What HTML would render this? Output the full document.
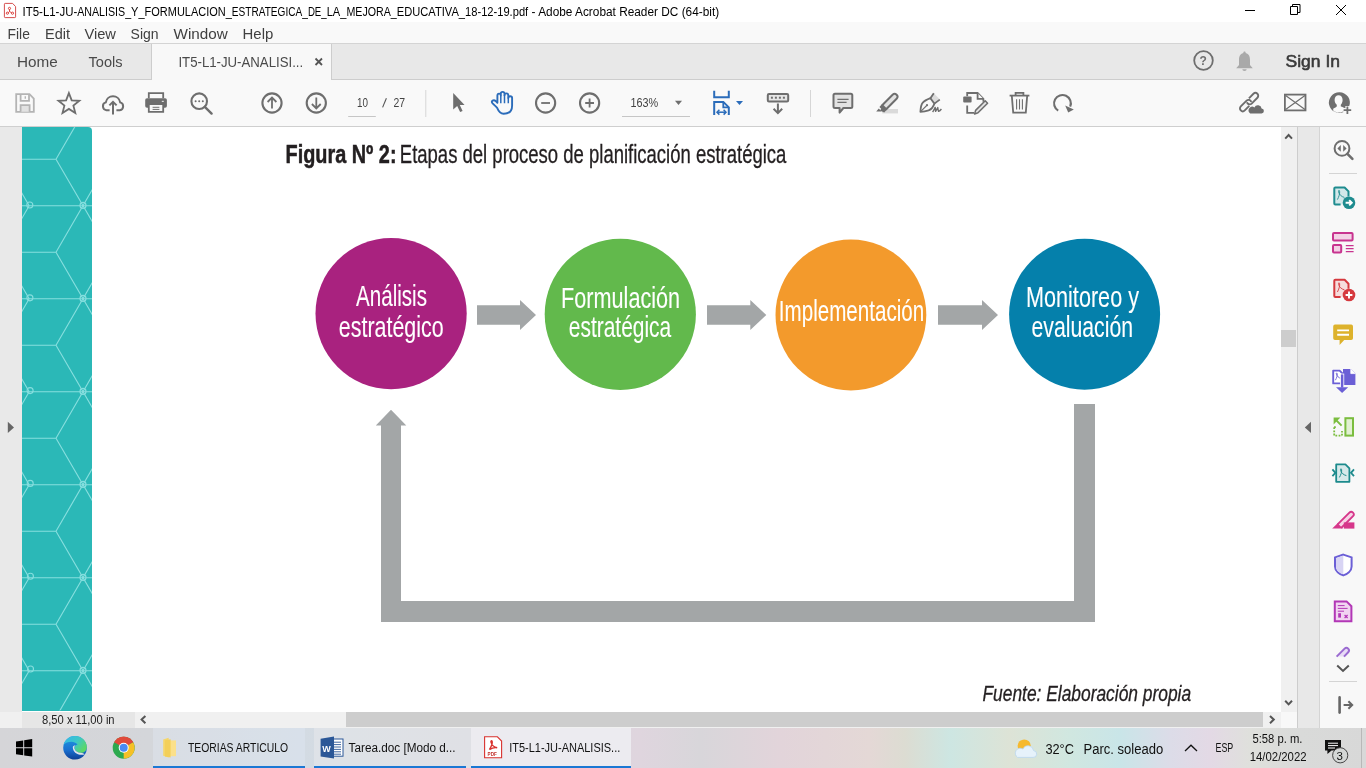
<!DOCTYPE html>
<html><head><meta charset="utf-8">
<style>
*{margin:0;padding:0;box-sizing:border-box}
html,body{width:1366px;height:768px;overflow:hidden;background:#fff;font-family:"Liberation Sans",sans-serif;position:relative}
.a{position:absolute}
.t{position:absolute;white-space:nowrap;line-height:1}
svg{position:absolute;overflow:visible;will-change:transform}
</style></head><body>

<!-- title bar -->
<div class="a" style="left:0;top:0;width:1366px;height:22px;background:#fff"></div>
<!-- menu bar -->
<div class="a" style="left:0;top:22px;width:1366px;height:22px;background:#f9f9f9;border-bottom:1px solid #d4d4d4"></div>
<!-- tab bar -->
<div class="a" style="left:0;top:44px;width:1366px;height:36px;background:#e8e8e8;border-bottom:1px solid #cdcdcd"></div>
<div class="a" style="left:151px;top:44px;width:181px;height:36px;background:#f8f8f8;border-left:1px solid #cdcdcd;border-right:1px solid #cdcdcd"></div>
<!-- toolbar -->
<div class="a" style="left:0;top:80px;width:1366px;height:47px;background:#f9f9f9;border-bottom:1px solid #cfcfcf"></div>
<!-- content -->
<div class="a" style="left:0;top:127px;width:22px;height:585px;background:#e9e9e9"></div>
<div class="a" style="left:22px;top:127px;width:1259px;height:585px;background:#fff"></div>
<div class="a" style="left:22px;top:127px;width:70px;height:583.5px;background:#2bb8b7;border-top-right-radius:4px"></div>
<div class="a" style="left:1281px;top:127px;width:16px;height:585px;background:#f0f0f0"></div>
<div class="a" style="left:1281px;top:330px;width:15px;height:17px;background:#cdcdcd"></div>
<div class="a" style="left:1297px;top:127px;width:1px;height:601px;background:#cdcdcd"></div>
<div class="a" style="left:1298px;top:127px;width:21px;height:601px;background:#e8e8e8"></div>
<div class="a" style="left:1319px;top:127px;width:1px;height:601px;background:#d4d4d4"></div>
<div class="a" style="left:1320px;top:127px;width:46px;height:601px;background:#f8f8f8"></div>

<svg style="left:0;top:0" width="1366" height="768" viewBox="0 0 1366 768">
<defs><clipPath id="tc"><path d="M22 127H88a4 4 0 0 1 4 4V710.5H22z"/></clipPath></defs>
<g clip-path="url(#tc)" stroke="#86dede" stroke-width="1.15" fill="none"><path d="M22 112.7H92M22 159.2H56M56 66.2L110 159.2M56 159.2L110 66.2M29.2 112.7L2.2 66.2M29.2 112.7L2.2 159.2M22 205.7H92M22 252.2H56M56 159.2L110 252.2M56 252.2L110 159.2M29.2 205.7L2.2 159.2M29.2 205.7L2.2 252.2M22 298.7H92M22 345.2H56M56 252.2L110 345.2M56 345.2L110 252.2M29.2 298.7L2.2 252.2M29.2 298.7L2.2 345.2M22 391.7H92M22 438.2H56M56 345.2L110 438.2M56 438.2L110 345.2M29.2 391.7L2.2 345.2M29.2 391.7L2.2 438.2M22 484.7H92M22 531.2H56M56 438.2L110 531.2M56 531.2L110 438.2M29.2 484.7L2.2 438.2M29.2 484.7L2.2 531.2M22 577.7H92M22 624.2H56M56 531.2L110 624.2M56 624.2L110 531.2M29.2 577.7L2.2 531.2M29.2 577.7L2.2 624.2M22 670.7H92M22 717.2H56M56 624.2L110 717.2M56 717.2L110 624.2M29.2 670.7L2.2 624.2M29.2 670.7L2.2 717.2M22 763.7H92M22 810.2H56M56 717.2L110 810.2M56 810.2L110 717.2M29.2 763.7L2.2 717.2M29.2 763.7L2.2 810.2"/><circle cx="29.6" cy="112.2" r="3"/><circle cx="83" cy="112.4" r="3"/><circle cx="29.8" cy="205.0" r="3"/><circle cx="83" cy="205.4" r="3"/><circle cx="29.9" cy="297.8" r="3"/><circle cx="83" cy="298.4" r="3"/><circle cx="30.1" cy="390.6" r="3"/><circle cx="83" cy="391.4" r="3"/><circle cx="30.2" cy="483.4" r="3"/><circle cx="83" cy="484.4" r="3"/><circle cx="30.4" cy="576.2" r="3"/><circle cx="83" cy="577.4" r="3"/><circle cx="30.5" cy="669.0" r="3"/><circle cx="83" cy="670.4" r="3"/><circle cx="30.7" cy="761.8" r="3"/><circle cx="83" cy="763.4" r="3"/></g>
</svg>
<svg style="left:0;top:0" width="1366" height="768" viewBox="0 0 1366 768" font-family="Liberation Sans">
<text x="285.5" y="162.6" font-size="25" font-weight="bold" fill="#231f20" stroke="#231f20" stroke-width="0.5" textLength="111" lengthAdjust="spacingAndGlyphs">Figura Nº 2:</text>
<text x="399.8" y="162.6" font-size="25" fill="#231f20" stroke="#231f20" stroke-width="0.3" textLength="386.6" lengthAdjust="spacingAndGlyphs">Etapas del proceso de planificación estratégica</text>
<circle cx="391.1" cy="313.6" r="75.6" fill="#a9227f"/>
<circle cx="620.3" cy="314.3" r="75.6" fill="#62b94c"/>
<circle cx="850.9" cy="315" r="75.4" fill="#f39a2c"/>
<circle cx="1084.6" cy="314.3" r="75.5" fill="#0580ab"/>
<g fill="#a3a6a7">
<path d="M477 305.2H520V300L536 315L520 330V324.7H477z"/>
<path d="M707 305.2H750.3V300L766.3 315L750.3 330V324.7H707z"/>
<path d="M938 305.2H982V300L998 315L982 330V324.7H938z"/>
<path d="M391 409.8L406.3 425.6H401V601H1074V404H1095V622H381V425.6H375.8z"/>
</g>
<g fill="#fff" font-size="29.5" stroke="#fff" stroke-width="0.1">
<text x="356" y="305.9" textLength="71" lengthAdjust="spacingAndGlyphs">Análisis</text>
<text x="338.8" y="336.6" textLength="104.8" lengthAdjust="spacingAndGlyphs">estratégico</text>
<text x="561.1" y="307.5" textLength="119" lengthAdjust="spacingAndGlyphs">Formulación</text>
<text x="568.8" y="337.1" textLength="102.4" lengthAdjust="spacingAndGlyphs">estratégica</text>
<text x="778.8" y="320.7" textLength="145.4" lengthAdjust="spacingAndGlyphs">Implementación</text>
<text x="1026" y="306.6" textLength="113" lengthAdjust="spacingAndGlyphs">Monitoreo y</text>
<text x="1031.5" y="337.1" textLength="101.6" lengthAdjust="spacingAndGlyphs">evaluación</text>
</g>
<text x="982.5" y="701" font-size="22" font-style="italic" fill="#231f20" stroke="#231f20" stroke-width="0.3" textLength="208.6" lengthAdjust="spacingAndGlyphs">Fuente: Elaboración propia</text>
</svg>

<!-- status / h scroll -->
<div class="a" style="left:0;top:712px;width:22px;height:16px;background:#f0f0f0"></div>
<div class="a" style="left:22px;top:712px;width:113px;height:16px;background:#e6e6e6"></div>
<div class="a" style="left:135px;top:712px;width:1146px;height:16px;background:#f0f0f0"></div>
<div class="a" style="left:346px;top:712px;width:917px;height:15px;background:#cdcdcd"></div>
<div class="a" style="left:1281px;top:712px;width:16px;height:16px;background:#f8f8f8"></div>

<!-- UI layer -->
<svg style="left:0;top:0" width="1366" height="768" viewBox="0 0 1366 768" font-family="Liberation Sans">
<g id="titlebar">
  <path d="M5.2 3.4H12.6L15.6 6.6V16.8Q15.6 17.6 14.8 17.6H5.2Q4.4 17.6 4.4 16.8V4.2Q4.4 3.4 5.2 3.4Z" fill="#fff" stroke="#d03a3a" stroke-width="0.9"/>
  <g fill="none" stroke="#d8322e" stroke-width="0.9"><circle cx="9.5" cy="8.4" r="1.1"/><circle cx="7.4" cy="13.2" r="1.1"/><circle cx="12.5" cy="13.2" r="1.1"/><path d="M9.5 9.5L9.5 11.6M9.5 11.6L8.3 12.6M9.5 11.6L11.5 12.6"/></g>
  <g font-size="12" fill="#000"><text x="22.6" y="15.8" textLength="54.6" lengthAdjust="spacingAndGlyphs">IT5-L1-JU-</text><text x="77.2" y="15.8" textLength="53.9" lengthAdjust="spacingAndGlyphs">ANALISIS_</text><text x="131.1" y="15.8" textLength="13.5" lengthAdjust="spacingAndGlyphs">Y_</text><text x="144.6" y="15.8" textLength="87.2" lengthAdjust="spacingAndGlyphs">FORMULACION_</text><text x="231.8" y="15.8" textLength="76.1" lengthAdjust="spacingAndGlyphs">ESTRATEGICA_</text><text x="307.9" y="15.8" textLength="18.8" lengthAdjust="spacingAndGlyphs">DE_</text><text x="326.7" y="15.8" textLength="19.7" lengthAdjust="spacingAndGlyphs">LA_</text><text x="346.4" y="15.8" textLength="50.4" lengthAdjust="spacingAndGlyphs">MEJORA_</text><text x="396.8" y="15.8" textLength="131.4" lengthAdjust="spacingAndGlyphs">EDUCATIVA_18-12-19.pdf</text><text x="531.6" y="15.8" textLength="187.6" lengthAdjust="spacingAndGlyphs">- Adobe Acrobat Reader DC (64-bit)</text></g>
  <path d="M1245 10.5h10" stroke="#000" stroke-width="1"/>
  <path d="M1290.5 6.5h7v8h-7z" fill="none" stroke="#000" stroke-width="1"/>
  <path d="M1292.5 6.5v-2h7.5v8h-2" fill="none" stroke="#000" stroke-width="1"/>
  <path d="M1336 5l10 10M1346 5l-10 10" stroke="#000" stroke-width="1"/>
</g>
<g id="menu" font-size="15" fill="#404040">
  <text x="7.6" y="38.9" textLength="22.3" lengthAdjust="spacingAndGlyphs">File</text>
  <text x="45.1" y="38.9" textLength="25" lengthAdjust="spacingAndGlyphs">Edit</text>
  <text x="84.4" y="38.9" textLength="31.6" lengthAdjust="spacingAndGlyphs">View</text>
  <text x="130.6" y="38.9" textLength="28" lengthAdjust="spacingAndGlyphs">Sign</text>
  <text x="173.5" y="38.9" textLength="54.2" lengthAdjust="spacingAndGlyphs">Window</text>
  <text x="242.6" y="38.9" textLength="30.7" lengthAdjust="spacingAndGlyphs">Help</text>
</g>
<g id="toolbar" fill="none" stroke="#6e6e6e" stroke-width="1.8">
  <!-- save -->
  <path d="M16.2 94.2H29.5L33.8 98.5V111.8H16.2Z" stroke="#b4b4b4"/>
  <path d="M20.6 94.2V100.8H29V94.2" stroke="#b4b4b4"/>
  <path d="M25.3 96.3V98.8" stroke="#b4b4b4" stroke-width="1.4"/>
  <path d="M20.6 111.8V105.2H29.6V111.8" stroke="#b4b4b4" fill="#e2e2e2"/>
  <!-- star -->
  <path d="M68.9 93.1L71.7 100.4L79.3 100.8L73.4 105.6L75.3 113.1L68.9 108.9L62.5 113.1L64.4 105.6L58.5 100.8L66.1 100.4Z" stroke-linejoin="miter"/>
  <!-- cloud upload -->
  <path d="M109.6 110.2H106.4A4 4 0 0 1 105.8 102.4A7.3 7.3 0 0 1 120.2 102.4A4 4 0 0 1 119.8 110.2H116.4" stroke-width="2"/>
  <path d="M113 114.4V101.8M109.4 105.4L113 101.8L116.6 105.4" stroke-width="2"/>
  <!-- print -->
  <path d="M148.8 98.2V93.2H163.2V98.2"/>
  <rect x="145.2" y="98.2" width="21.7" height="9.6" rx="1.8" fill="#6e6e6e" stroke="none"/>
  <path d="M148.8 104.2H163.2V111.8H148.8Z" fill="#f8f8f8"/>
  <path d="M152.6 107.3H159.4M152.6 109.4H159.4" stroke-width="1"/>
  <rect x="161.8" y="100.8" width="2" height="1.2" fill="#ddd" stroke="none"/>
  <!-- search -->
  <circle cx="199.2" cy="101.2" r="7.8" stroke-width="2.1"/>
  <path d="M204.8 106.8L211.6 113.6" stroke-width="2.4" stroke-linecap="round"/>
  <g fill="#6e6e6e" stroke="none"><circle cx="195.6" cy="101.2" r="1"/><circle cx="199.2" cy="101.2" r="1"/><circle cx="202.8" cy="101.2" r="1"/></g>
  <!-- up / down -->
  <circle cx="272" cy="103" r="9.6" stroke-width="2.1"/>
  <path d="M272 108.6V97.6M267.6 102L272 97.6L276.4 102"/>
  <circle cx="316.3" cy="103" r="9.6" stroke-width="2.1"/>
  <path d="M316.3 97.4V108.4M311.9 104L316.3 108.4L320.7 104"/>
  <path d="M348.2 116.5H375.8M622 116.5H690" stroke="#c6c6c6" stroke-width="1"/>
  <path d="M425.8 90V117M810.5 90V117" stroke="#d6d6d6" stroke-width="1"/>
  <!-- cursor -->
  <path d="M453.2 93L453.2 109.6L457.2 105.9L460.1 112.1L462.6 111L459.8 104.9L464.6 104.9Z" fill="#6e6e6e" stroke="none"/>
  <!-- hand -->
  <path d="M497 107.6L492.6 103.4Q491 101.6 492.6 100.6Q494.2 99.6 496 101.4L497.4 102.8V95.6Q497.4 93.6 499.1 93.6Q500.8 93.6 500.8 95.6V93.8Q500.8 91.9 502.65 91.9Q504.5 91.9 504.5 93.8V95.2Q504.5 93.4 506.4 93.4Q508.3 93.4 508.3 95.4V97.9Q508.3 96.2 510.2 96.2Q512.1 96.2 512.1 98.1V105.4Q512.1 113.8 503.6 113.8Q499.6 113.8 497 107.6Z" stroke="#2b6cba" stroke-width="1.9" stroke-linejoin="round"/>
  <path d="M500.8 95.4V103.2M504.5 95V103.2M508.3 97.6V103.2" stroke="#2b6cba" stroke-width="1.5"/>
  <!-- zoom out/in -->
  <circle cx="545.6" cy="103" r="9.6" stroke-width="2.1"/>
  <path d="M541.2 103H550"/>
  <circle cx="589.6" cy="103" r="9.6" stroke-width="2.1"/>
  <path d="M585.2 103H594M589.6 98.6V107.4"/>
  <path d="M675 100.8H682L678.5 105.1Z" fill="#6e6e6e" stroke="none"/>
  <!-- fit page -->
  <g stroke="#2b6cba" stroke-width="2">
  <path d="M714.2 90.8V97.2H728.8V90.8"/>
  <path d="M714.2 114.9V101.9H723.3L728.8 107.4V114.9"/>
  <path d="M723.3 101.9V107.4H728.8" stroke-width="1.8"/>
  <path d="M717.2 112.2H725.8" stroke-width="1.5"/>
  <path d="M719.4 109.8L717 112.2L719.4 114.6M723.6 109.8L726 112.2L723.6 114.6" stroke-width="1.5"/>
  </g>
  <path d="M736 101H743L739.5 105Z" fill="#2b6cba" stroke="none"/>
  <!-- scroll tool -->
  <rect x="767.8" y="94" width="20.4" height="7.4" rx="1.2" stroke-width="2" fill="#e6e6e6"/>
  <g fill="#6e6e6e" stroke="none"><rect x="770.9" y="96.7" width="2" height="2"/><rect x="774.9" y="96.7" width="2" height="2"/><rect x="778.9" y="96.7" width="2" height="2"/><rect x="782.9" y="96.7" width="2" height="2"/></g>
  <path d="M777.9 103.4V113M773.6 108.8L777.9 113.1L782.2 108.8" stroke-width="2"/>
  <!-- comment -->
  <path d="M835 93.8H850.8Q852.3 93.8 852.3 95.3V106.5Q852.3 108 850.8 108H843.4L839.6 112.6V108H835Q833.5 108 833.5 106.5V95.3Q833.5 93.8 835 93.8Z" fill="#e2e2e2" stroke-width="2" stroke-linejoin="round"/>
  <path d="M837.4 99.4H848.6M837.4 102.4H846.6" stroke-width="1.2"/>
  <!-- highlighter -->
  <rect x="882.2" y="109" width="15.8" height="4.4" fill="#dadada" stroke="none"/>
  <path d="M892.6 94.8Q894.6 92.8 896.6 94.8Q898.6 96.8 896.6 98.8L886.2 109.2L882.2 105.2Z" fill="#e2e2e2" stroke-width="2" stroke-linejoin="round"/>
  <path d="M881.6 104.6L886.8 109.8L884.2 112.4L880 110.6L881.2 108.8L879.4 107Z" fill="#6e6e6e" stroke="none"/><path d="M878.8 108.6L881.6 111.4H876.2Z" fill="#6e6e6e" stroke="none"/>
  <!-- pen -->
  <path d="M930.4 98.2L933.8 93.2L940 99.4L934.4 103.6Z" fill="#dcdcdc" stroke="none"/>
  <path d="M920.4 111.8C920.6 107.6 921 104.6 922.8 102.6C924.6 100.6 927.4 99.4 930.4 98.2L934.4 103.6C933.4 106.6 931.4 109.2 928.6 110.4C926 111.4 923.4 111.8 920.4 111.8Z" stroke-linejoin="round"/>
  <path d="M920.8 111.4L926.6 105.6" stroke-width="1.3"/>
  <circle cx="927" cy="105.2" r="1.1" fill="#6e6e6e" stroke="none"/>
  <path d="M930.4 98.2L933.8 93.2M934.4 103.6L939.8 99.6"/>
  <path d="M932.6 112C933.6 110.6 934.6 108.4 935.2 107.4C935.6 108.8 935.4 110.6 935.6 111.4C936.4 110 937.4 108.4 937.8 107.6C938 109 938 110.4 938.6 111.4C939.6 111 940.6 110 941.4 109" stroke-width="1.4" stroke-linejoin="round"/>
  <!-- edit doc -->
  <path d="M967.2 96.2V93H977.6L983.4 98.8V101.8" />
  <path d="M977.6 93V98.8H983.4" fill="#f8f8f8"/>
  <path d="M967.2 105.6V112.8H974" />
  <rect x="963.2" y="96.6" width="8.4" height="6" rx="1" fill="#6e6e6e" stroke="none"/>
  <path d="M974.6 114L975.6 110.4L985.2 100.8L987.6 103.2L978 112.8Z" fill="#e2e2e2" stroke-width="1.5" stroke-linejoin="round"/>
  <!-- trash -->
  <path d="M1009.6 95.6H1029.4"/>
  <path d="M1015.6 95.6V92.9H1023.4V95.6"/>
  <path d="M1011.8 95.6L1013.2 112.6H1025.8L1027.2 95.6"/>
  <path d="M1016.6 99.2V109.6M1019.5 99.2V109.6M1022.4 99.2V109.6" stroke-width="1.1"/>
  <!-- rotate -->
  <path d="M1058.2 110.6A8.4 8.4 0 1 1 1070.2 106.6" stroke-width="2.1"/>
  <path d="M1065.2 105.6L1073.8 109.4L1068.2 112.4Z" fill="#6e6e6e" stroke="none"/>
  <!-- link cloud -->
  <g transform="translate(1252.6 98.6) rotate(-45)"><path d="M-2.4 -2.8H4A2.8 2.8 0 0 1 4 2.8H-4.2A2.8 2.8 0 0 1 -6.6 -1.4" stroke-width="1.9"/></g>
  <g transform="translate(1245.6 105.6) rotate(-45)"><path d="M2.4 2.8H-4A2.8 2.8 0 0 1 -4 -2.8H4.2A2.8 2.8 0 0 1 6.6 1.4" stroke-width="1.9"/></g>
  <path d="M1250.2 113.4H1261.4A2.4 2.4 0 0 0 1261.6 108.6A3.8 3.8 0 0 0 1254.4 107.4A3 3 0 0 0 1250.2 113.4Z" fill="#6e6e6e" stroke="none"/>
  <!-- mail -->
  <rect x="1284.9" y="94.6" width="20.6" height="15.8"/>
  <path d="M1285.6 95.6L1305 109.6M1305 95.6L1285.6 109.6" stroke-width="1.2"/>
  <!-- user plus -->
  <path d="M1339.2 92.3A10.3 10.3 0 1 0 1343.6 111.9L1345.4 110.2L1349 106.8A10.3 10.3 0 0 0 1339.2 92.3ZM1338.6 95.3C1341 95.3 1342.6 97.2 1342.6 100C1342.6 102.2 1341.6 104 1340.8 104.8V106.4C1342.2 106.8 1344.4 107.6 1346 108.8L1344.4 110.6C1342.8 112 1341 112.6 1339.2 112.6C1337.2 112.6 1335 112 1333.2 110.6V108.8C1334.8 107.6 1336.6 106.8 1336.8 106.4V104.8C1335.8 104 1334.6 102.2 1334.6 100C1334.6 97.2 1336.2 95.3 1338.6 95.3Z" fill="#6e6e6e" fill-rule="evenodd" stroke="none"/>
  <path d="M1343.2 110.2H1351.6M1347.4 106V114.4" stroke="#f8f8f8" stroke-width="4"/>
  <path d="M1343.6 110.2H1351.2M1347.4 106.4V114" stroke-width="1.8"/>
</g>
<g font-size="13" fill="#444">
  <text x="357" y="107" textLength="11" lengthAdjust="spacingAndGlyphs">10</text>
  <path d="M386.4 98.2L382.6 107.4" stroke="#555" stroke-width="1.1"/>
  <text x="393.4" y="107" textLength="11.6" lengthAdjust="spacingAndGlyphs">27</text>
  <text x="630.4" y="107" textLength="27.8" lengthAdjust="spacingAndGlyphs">163%</text>
</g>
<g id="rightpane" fill="none" stroke-width="1.8">
  <!-- v scroll chevrons -->
  <path d="M1285.2 138.6L1288.6 135L1292 138.6" stroke="#555" stroke-width="2"/>
  <path d="M1285.2 700.8L1288.6 704.4L1292 700.8" stroke="#555" stroke-width="2"/>
  <path d="M1311 421.8V433L1304.8 427.4Z" fill="#666" stroke="none"/>
  <path d="M7.8 421.8V433L14 427.4Z" fill="#666" stroke="none"/>
  <path d="M145.4 716L141.6 719.6L145.4 723.2" stroke="#555" stroke-width="2"/>
  <path d="M1270 716L1273.8 719.6L1270 723.2" stroke="#555" stroke-width="2"/>
  <!-- zoom -->
  <circle cx="1342" cy="148.4" r="7.4" stroke="#6e6e6e" stroke-width="2"/>
  <path d="M1347.4 153.8L1352.4 158.8" stroke="#6e6e6e" stroke-width="2.6" stroke-linecap="round"/>
  <path d="M1340.8 145v6.8l-3.4-3.4zM1343.2 145v6.8l3.4-3.4z" fill="#6e6e6e" stroke="none"/>
  <path d="M1329 173.5H1357M1329 681.5H1357" stroke="#d4d4d4" stroke-width="1"/>
  <!-- export pdf teal -->
  <path d="M1334.3 187.5H1344.6L1348.5 191.4V204.5H1334.3Z" fill="#d3e8ea" stroke="none"/>
  <path d="M1340.6 204.5H1335.3Q1334.3 204.5 1334.3 203.5V188.5Q1334.3 187.5 1335.3 187.5H1344.6L1348.5 191.4V196.4" stroke="#1f8c8f" stroke-width="2" stroke-linejoin="round"/>
  <path d="M1337.4 199.6C1338.8 197 1340 193.6 1339.6 191.2C1339.2 189.6 1338.2 190.4 1338.6 192C1339.2 194.6 1341.6 196.8 1344.4 197.4" stroke="#1f8c8f" stroke-width="0.9"/>
  <circle cx="1349" cy="202.8" r="6.3" fill="#1f8c8f" stroke="none"/>
  <path d="M1345.6 202.8H1351.8M1349.2 200.2L1351.8 202.8L1349.2 205.4" stroke="#fff" stroke-width="1.9"/>
  <!-- organize magenta -->
  <rect x="1333" y="232.9" width="19.6" height="7.6" rx="1" stroke="#c8348f" fill="#f3d2e6" stroke-width="2"/>
  <rect x="1333" y="244.9" width="8.2" height="7.6" rx="1" stroke="#c8348f" fill="#f3d2e6" stroke-width="2"/>
  <path d="M1345.8 245.6H1353.6M1345.8 248.6H1353.6M1345.8 251.6H1353.6" stroke="#c8348f" stroke-width="1.2"/>
  <!-- create pdf red -->
  <path d="M1334.3 279.8H1344.6L1348.5 283.7V297H1334.3Z" fill="#f6dcdc" stroke="none"/>
  <path d="M1340.6 297H1335.3Q1334.3 297 1334.3 296V280.8Q1334.3 279.8 1335.3 279.8H1344.6L1348.5 283.7V288.8" stroke="#d5393e" stroke-width="2" stroke-linejoin="round"/>
  <path d="M1337.4 292C1338.8 289.4 1340 286 1339.6 283.6C1339.2 282 1338.2 282.8 1338.6 284.4C1339.2 287 1341.6 289.2 1344.4 289.8" stroke="#d5393e" stroke-width="0.9"/>
  <circle cx="1349" cy="295" r="6.3" fill="#d5393e" stroke="none"/>
  <path d="M1345.6 295H1352.4M1349 291.6V298.4" stroke="#fff" stroke-width="1.9"/>
  <!-- comment yellow -->
  <path d="M1335 324.6H1351.2Q1353 324.6 1353 326.4V338.2Q1353 340 1351.2 340H1344.2L1339.6 345V340H1335Q1333.2 340 1333.2 338.2V326.4Q1333.2 324.6 1335 324.6Z" fill="#ddb22c" stroke="none"/>
  <path d="M1337.2 330.4H1349M1337.2 334.8H1349" stroke="#fff" stroke-width="1.9"/>
  <!-- combine purple -->
  <path d="M1333.2 370.6H1339.6L1342.4 373.4V383.4H1333.2Z" stroke="#6b5fd6" fill="#fff" stroke-width="1.9" stroke-linejoin="round"/>
  <path d="M1335.4 380.2C1336.6 378 1337.6 375.4 1337.2 373.6C1336.8 372.4 1336 373 1336.4 374.2C1337 376.2 1338.8 378 1341 378.4" stroke="#6b5fd6" stroke-width="0.9"/>
  <path d="M1343 369H1350.8L1355.4 373.6V385H1343Z" fill="#6b5fd6" stroke="none"/>
  <path d="M1350.8 369V373.6H1355.4" fill="#fff" stroke="#fff" stroke-width="0.8"/>
  <rect x="1340.4" y="374" width="3.4" height="14" fill="#6b5fd6" stroke="#fff" stroke-width="0.8"/>
  <path d="M1336 387.2H1348.2L1342.1 393Z" fill="#6b5fd6" stroke="none"/>
  <!-- green compare -->
  <rect x="1345.4" y="418.2" width="7.6" height="17.4" stroke="#7bbd3f" fill="#e2f1d2" stroke-width="2"/>
  <path d="M1334.2 427.2V435.6H1342M1342 435.6V431" stroke="#7bbd3f" stroke-width="1.8" stroke-dasharray="1.8 1.4"/>
  <path d="M1334 427.2H1337" stroke="#7bbd3f" stroke-width="1.8" stroke-dasharray="1.8 1.4"/>
  <path d="M1341.6 425.6L1336.6 420.6" stroke="#7bbd3f" stroke-width="2"/>
  <path d="M1333.6 417.6H1340.4L1333.6 424.4Z" fill="#7bbd3f" stroke="none"/>
  <!-- compress teal -->
  <path d="M1336.2 464.4H1345.4L1349.4 468.4V481.8H1336.2Z" stroke="#1c8a8c" fill="#d6e9ea" stroke-width="1.8" stroke-linejoin="round"/>
  <path d="M1339.4 477.4C1340.8 475 1342 471.8 1341.6 469.6C1341.2 468 1340.2 468.8 1340.6 470.4C1341.2 472.8 1343.6 475 1346.4 475.6" stroke="#1c8a8c" stroke-width="1"/>
  <path d="M1332.4 469.4L1335.4 472.8L1332.4 476.2M1354 469.4L1351 472.8L1354 476.2" stroke="#1c8a8c" stroke-width="1.8"/>
  <!-- fill sign pink -->
  <path d="M1337.6 524.4L1349.4 512.6Q1351.2 510.8 1353 512.6Q1354.8 514.4 1353 516.2L1341.2 528" stroke="#d6378b" fill="#f7d4e6" stroke-width="1.9"/>
  <path d="M1332.2 528.6L1337.6 523.2L1342.6 528.2V528.6Z" fill="#d6378b" stroke="none"/>
  <rect x="1343.8" y="522.4" width="10.6" height="6.2" fill="#d6378b" stroke="none"/>
  <!-- shield -->
  <path d="M1343.3 554.6L1351.6 557.4V566.4C1351.6 571 1347 574.2 1343.3 575.4C1339.6 574.2 1335 571 1335 566.4V557.4Z" stroke="#6b5fd6" fill="#fff" stroke-width="2"/>
  <path d="M1343.3 555.6V574.2C1339.6 573 1336 570.4 1336 566.4V558.2Z" fill="#d8d4f4" stroke="none"/>
  <!-- fill form purple doc -->
  <path d="M1334.8 601.4H1346.6L1351.4 606.2V621.2H1334.8Z" stroke="#b237b6" fill="#f1d4f1" stroke-width="2"/>
  <path d="M1337.8 605.6H1344.6M1337.8 608.4H1347.6M1337.8 611.2H1344" stroke="#b237b6" stroke-width="1"/>
  <rect x="1338.2" y="613.2" width="2.8" height="4.4" fill="#b237b6" stroke="none"/>
  <path d="M1344.6 615L1347.6 618M1347.6 615L1344.6 618" stroke="#b237b6" stroke-width="1.2"/>
  <!-- partial pen -->
  <path d="M1336.6 656.6L1344.6 648.6Q1346.4 646.8 1348.2 648.6Q1350 650.4 1348.2 652.2L1344 656.6" stroke="#9b6bd1" fill="#e8dcf6" stroke-width="2"/>
  <path d="M1337.2 665.6L1343 671L1348.8 665.6" stroke="#555" stroke-width="2"/>
  <!-- collapse -->
  <path d="M1339.6 697.4V712.6" stroke="#666" stroke-width="2.6" stroke-linecap="round"/>
  <path d="M1343.6 705H1352.2M1348.4 701.2L1352.2 705L1348.4 708.8" stroke="#666" stroke-width="2"/>
</g>
<g id="status" font-size="12" fill="#222">
  <text x="42" y="724" textLength="72.6" lengthAdjust="spacingAndGlyphs">8,50 x 11,00 in</text>
</g>
<g id="tabs" fill="#4a4a4a">
  <text x="17" y="66.8" font-size="15" textLength="40.8" lengthAdjust="spacingAndGlyphs">Home</text>
  <text x="88.5" y="66.8" font-size="15" textLength="34" lengthAdjust="spacingAndGlyphs">Tools</text>
  <text x="178.4" y="66.8" font-size="14" textLength="124.8" lengthAdjust="spacingAndGlyphs">IT5-L1-JU-ANALISI...</text>
  <path d="M315.5 58.5l6.5 6.5M322 58.5l-6.5 6.5" stroke="#555" stroke-width="1.8"/>
  <text x="1285.5" y="67" font-size="16" fill="#3a3a3a" stroke="#3a3a3a" stroke-width="0.55" textLength="54.5" lengthAdjust="spacingAndGlyphs">Sign In</text>
  <circle cx="1203.5" cy="60.5" r="9.3" fill="none" stroke="#6e6e6e" stroke-width="1.8"/>
  <text x="1199.6" y="65" font-size="12" font-weight="bold" fill="#6e6e6e">?</text>
  <path d="M1244.5 51.5c-.9 0-1.2.7-1.2 1.5-3.3.9-4.3 3.5-4.3 7v5l-2.8 3.3h16.6l-2.8-3.3v-5c0-3.5-1-6.1-4.3-7 0-.8-.3-1.5-1.2-1.5zM1242.3 69.3a2.2 1.6 0 0 0 4.4 0z" fill="#a9a9a9"/>
</g>
</svg>
<!-- taskbar -->
<div class="a" style="left:0;top:728px;width:1366px;height:40px;background:linear-gradient(90deg,#d5d5d8 0px,#d4d6da 150px,#d3dbe3 300px,#d6d8de 470px,#dfd5de 640px,#d8d6da 700px,#e2d4da 780px,#e4d8d6 870px,#dcdcd2 905px,#cde6e2 950px,#dde3d6 1010px,#d0e7e0 1070px,#c9e5e8 1120px,#dcdce8 1170px,#e3d9e5 1210px,#dfe0dc 1250px,#d9dad9 1300px,#d8d8d8 1366px)"></div>

<!-- taskbar items -->
<div class="a" style="left:153px;top:728px;width:152px;height:40px;background:rgba(225,235,245,0.35)"></div>
<div class="a" style="left:314px;top:728px;width:157px;height:40px;background:rgba(235,235,238,0.45)"></div>
<div class="a" style="left:471px;top:728px;width:160px;height:40px;background:#ecebf0"></div>
<div class="a" style="left:153px;top:766px;width:152px;height:2px;background:#1b78d4"></div>
<div class="a" style="left:314px;top:766px;width:152px;height:2px;background:#1b78d4"></div>
<div class="a" style="left:471px;top:766px;width:160px;height:2px;background:#1b78d4"></div>
<svg style="left:0;top:0" width="1366" height="768" viewBox="0 0 1366 768" font-family="Liberation Sans">
  <!-- windows -->
  <path d="M16 741.4L23.2 740.4V747.3H16ZM24.2 740.2L32.2 739.1V747.3H24.2ZM16 748.3H23.2V755.2L16 754.2ZM24.2 748.3H32.2V756.5L24.2 755.4Z" fill="#000"/>
  <!-- edge -->
  <defs>
    <linearGradient id="eg1" x1="0" y1="0" x2="1" y2="1"><stop offset="0" stop-color="#35c1f1"/><stop offset="0.5" stop-color="#1e8fd8"/><stop offset="1" stop-color="#114a9c"/></linearGradient>
    <linearGradient id="eg2" x1="0" y1="0" x2="1" y2="1"><stop offset="0" stop-color="#2ec4e8"/><stop offset="1" stop-color="#52d56a"/></linearGradient>
  </defs>
  <defs><linearGradient id="eg3" x1="0" y1="0" x2="0" y2="1"><stop offset="0" stop-color="#1f9be3"/><stop offset="0.6" stop-color="#1a6fcf"/><stop offset="1" stop-color="#0f3f94"/></linearGradient>
  <linearGradient id="eg4" x1="0" y1="0" x2="1" y2="0.6"><stop offset="0" stop-color="#33b5ee"/><stop offset="0.55" stop-color="#3cc7c8"/><stop offset="1" stop-color="#5bd865"/></linearGradient></defs>
  <path d="M63.2 747.8A11.8 11.8 0 0 1 86.8 747.8C86.8 751 85.8 753.4 84.8 754.4C82.6 757.8 79 759.6 75 759.6A11.8 11.8 0 0 1 63.2 747.8Z" fill="url(#eg3)"/>
  <path d="M63.6 744.6C65.2 739.2 69.8 736 75 736C81.6 736 86.8 741 86.8 747C86.8 750.8 84.2 752.8 81 752.8C77.6 752.8 75.2 751 74.6 748.8C74.2 746.6 75.4 744.8 77.6 744.4C75.8 742.6 73.6 741.8 71.6 741.8C68 741.8 65.2 743 63.6 744.6Z" fill="url(#eg4)"/>
  <path d="M72.8 747.2C72.8 751.6 76.6 754.8 81.4 754.8C82.8 754.8 84 754.6 84.8 754.2C83.6 753.4 82.4 753 81 752.8C77.6 752.6 75 750.8 74.4 748.4C74.2 747 74.6 745.8 75.6 745.2C73.8 745.4 72.8 746.2 72.8 747.2Z" fill="#dfe4ea"/>
  <!-- chrome -->
  <circle cx="123.7" cy="747.8" r="11" fill="#2da94f"/>
  <path d="M123.7 747.8L114.2 742.3A11 11 0 0 1 133.2 742.3Z" fill="#e04a3b"/>
  <path d="M123.7 747.8L133.2 742.3A11 11 0 0 1 123.7 758.8Z" fill="#f6c026"/>
  <path d="M114.2 742.3A11 11 0 0 1 133.2 742.3H123.7Z" fill="#e04a3b"/>
  <circle cx="123.7" cy="747.8" r="5" fill="#fff"/>
  <circle cx="123.7" cy="747.8" r="4" fill="#4a8af4"/>
  <!-- folder -->
  <path d="M163.2 739.4L168.6 737.8V757.4L163.2 755.8Z" fill="#f5d66a"/>
  <path d="M167.6 740.4H176V756.2H167.6Z" fill="#fbe08a"/>
  <path d="M165 740.2L170.6 739.2V757.6L165 756.4Z" fill="#f3cf5a"/>
  <!-- word -->
  <rect x="329.6" y="739" width="13.4" height="17.2" fill="#fff" stroke="#2b5797" stroke-width="1"/>
  <path d="M332 742.2H341M332 744.6H341M332 747H341M332 749.4H341M332 751.8H341M332 754.2H341" stroke="#2b5797" stroke-width="0.9"/>
  <path d="M320.6 738.8L334 736.6V758.6L320.6 756.6Z" fill="#2b5797"/>
  <text x="322.2" y="751.8" font-size="9" font-weight="bold" fill="#fff">W</text>
  <!-- pdf -->
  <path d="M484.6 736.8H497.4L501.6 741V757.8H484.6Z" fill="#fff" stroke="#d8322e" stroke-width="1.1"/>
  <path d="M489.4 749.6C491 747 492.6 743.6 492.2 741.6C491.8 740.2 490.6 740.8 491 742.2C491.6 744.6 494 747.2 497.2 747.8C495 747.4 491.6 748.2 489.8 749.4" fill="none" stroke="#d8322e" stroke-width="1.4"/>
  <text x="487.6" y="755.6" font-size="4.6" font-weight="bold" fill="#c0302c">PDF</text>
  <g font-size="12.5" fill="#111">
    <text x="188" y="751.9" textLength="100.1" lengthAdjust="spacingAndGlyphs">TEORIAS ARTICULO</text>
    <text x="348.6" y="751.9" textLength="107" lengthAdjust="spacingAndGlyphs">Tarea.doc [Modo d...</text>
    <text x="509.2" y="751.9" textLength="111.1" lengthAdjust="spacingAndGlyphs">IT5-L1-JU-ANALISIS...</text>
    <text x="1045.4" y="753.8" font-size="14" textLength="28.5" lengthAdjust="spacingAndGlyphs">32°C</text>
    <text x="1083.5" y="753.8" font-size="14" textLength="79.8" lengthAdjust="spacingAndGlyphs">Parc. soleado</text>
    <text x="1215.5" y="752" textLength="17.8" lengthAdjust="spacingAndGlyphs">ESP</text>
    <text x="1252.4" y="742.8" textLength="50.1" lengthAdjust="spacingAndGlyphs">5:58 p. m.</text>
    <text x="1249.7" y="760.8" textLength="56.9" lengthAdjust="spacingAndGlyphs">14/02/2022</text>
  </g>
  <!-- weather -->
  <circle cx="1024.2" cy="746" r="6.6" fill="#f6b92e"/>
  <path d="M1017.6 757.4H1033A3.4 3.4 0 0 0 1033.6 750.6A5.6 5.6 0 0 0 1023 749A4.4 4.4 0 0 0 1017.6 757.4Z" fill="#e6f2fb" stroke="#b9d6ee" stroke-width="0.8"/>
  <path d="M1185 751L1191 745.2L1197 751" fill="none" stroke="#111" stroke-width="1.3"/>
  <!-- notification -->
  <path d="M1325 740H1341V750.4H1331.6L1327.4 754V750.4H1325Z" fill="#111"/>
  <path d="M1328 743.2H1338M1328 745.6H1338M1328 748H1335" stroke="#fff" stroke-width="1"/>
  <circle cx="1340.2" cy="755.3" r="7.6" fill="#d4d7d6" stroke="#444" stroke-width="1"/>
  <text x="1336.6" y="759.6" font-size="11.5" fill="#111">3</text>
  <path d="M1361.5 728V768" stroke="#b8b8b8" stroke-width="1"/>
</svg>
</body></html>
